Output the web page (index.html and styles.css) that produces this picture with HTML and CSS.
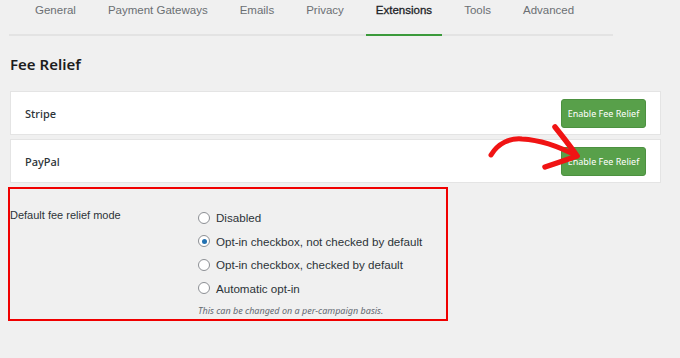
FILE: index.html
```html
<!DOCTYPE html>
<html>
<head>
<meta charset="utf-8">
<link rel="stylesheet" href="styles.css">
</head>
<body>
<div class="page">
  <nav class="tabs">
    <a class="tab">General</a>
    <a class="tab">Payment Gateways</a>
    <a class="tab">Emails</a>
    <a class="tab">Privacy</a>
    <a class="tab active">Extensions</a>
    <a class="tab">Tools</a>
    <a class="tab">Advanced</a>
  </nav>
  <h2 class="title">Fee Relief</h2>
  <div class="cards">
    <div class="card"><span class="card-name">Stripe</span><button class="btn">Enable Fee Relief</button></div>
    <div class="card"><span class="card-name">PayPal</span><button class="btn">Enable Fee Relief</button></div>
    <svg class="arrow" width="120" height="70" viewBox="0 0 120 70">
      <path d="M13 36 C 20 24, 32 19, 44 20 C 62 21, 82 28, 99 37" fill="none" stroke="#f01414" stroke-width="5" stroke-linecap="round"/>
      <path d="M77 8 C 85 18, 93 28, 99 37 C 88 41, 76 45, 67 48" fill="none" stroke="#f01414" stroke-width="5.5" stroke-linecap="round" stroke-linejoin="round"/>
    </svg>
  </div>
  <section class="setting">
    <div class="setting-label">Default fee relief mode</div>
    <div class="options">
      <label class="opt"><span class="radio"></span>Disabled</label>
      <label class="opt"><span class="radio checked"></span>Opt-in checkbox, not checked by default</label>
      <label class="opt"><span class="radio"></span>Opt-in checkbox, checked by default</label>
      <label class="opt"><span class="radio"></span>Automatic opt-in</label>
      <p class="help">This can be changed on a per-campaign basis.</p>
    </div>
  </section>
</div>
</body>
</html>
```

FILE: styles.css
```css
html, body {
  margin: 0;
  padding: 0;
  background: #f0f0f0;
}
.page {
  position: relative;
  font-family: "Noto Sans", "Open Sans", sans-serif;
  color: #1d2327;
}
.tabs {
  display: flex;
  gap: 12px;
  margin: 0 67px 0 9px;
  padding-left: 16px;
  border-bottom: 2px solid #e3e3e3;
  height: 34px;
  box-sizing: content-box;
}
.tab {
  font-family: "Liberation Sans", Arial, sans-serif;
  font-size: 11.5px;
  white-space: nowrap;
  color: #6b6f73;
  padding: 3px 10px 0;
  line-height: 14px;
  margin-bottom: -2px;
  border-bottom: 2px solid transparent;
}
.tab.active {
  color: #1d2327;
  border-bottom-color: #3b9a3b;
  -webkit-text-stroke: 0.3px #1d2327;
}
.title {
  margin: 16px 0 0 10px;
  font-size: 15px;
  font-weight: 600;
  line-height: 24px;
  color: #1d1d1d;
}
.cards {
  position: relative;
  margin: 15px 0 0 10px;
  width: 651px;
  display: flex;
  flex-direction: column;
  gap: 4px;
}
.card {
  background: #fff;
  border: 1px solid #e4e4e4;
  height: 44px;
  box-sizing: border-box;
  display: flex;
  align-items: center;
  justify-content: space-between;
  padding: 0 14px 0 14px;
}
.card-name {
  font-size: 11px;
  font-weight: 500;
  color: #2c3338;
}
.btn {
  font-family: "Noto Sans", sans-serif;
  background: #58a04a;
  border: 1px solid #4c9140;
  border-radius: 3px;
  color: #fff;
  font-size: 9px;
  height: 29px;
  width: 85px;
  padding: 0;
}
.arrow {
  position: absolute;
  left: 468px;
  top: 28px;
}
.setting {
  margin: 4px 0 0 8px;
  width: 436px;
  height: 130px;
  border: 2px solid #f00000;
  display: flex;
  box-sizing: content-box;
}
.setting-label {
  width: 188px;
  font-family: "Liberation Sans", Arial, sans-serif;
  font-size: 11px;
  padding-top: 20px;
  color: #2c3338;
}
.options {
  padding-top: 17px;
  display: flex;
  flex-direction: column;
}
.opt {
  display: flex;
  align-items: center;
  font-family: "Liberation Sans", Arial, sans-serif;
  font-size: 11.6px;
  height: 23.5px;
  color: #2c3338;
}
.radio {
  width: 12px;
  height: 12px;
  border: 1px solid #8c8f94;
  border-radius: 50%;
  background: #fff;
  margin-right: 6px;
  box-sizing: border-box;
  display: flex;
  align-items: center;
  justify-content: center;
}
.radio.checked::after {
  content: "";
  width: 5px;
  height: 5px;
  border-radius: 50%;
  background: #2271b1;
}
.help {
  margin: 4px 0 0 0;
  font-size: 9px;
  font-style: italic;
  color: #646970;
}
```
